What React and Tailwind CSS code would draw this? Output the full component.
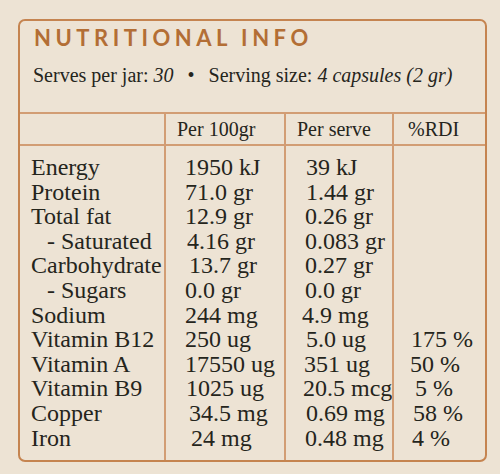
import React from "react";

const rows = [
  { l: "Energy", a: "1950 kJ", ap: "pl-[19px]", b: "39 kJ", bp: "pl-[20px]", c: "", cp: "" },
  { l: "Protein", a: "71.0 gr", ap: "pl-[19px]", b: "1.44 gr", bp: "pl-[20px]", c: "", cp: "" },
  { l: "Total fat", a: "12.9 gr", ap: "pl-[19px]", b: "0.26 gr", bp: "pl-[19px]", c: "", cp: "" },
  { l: "- Saturated", ind: true, a: "4.16 gr", ap: "pl-[21px]", b: "0.083 gr", bp: "pl-[19px]", c: "", cp: "" },
  { l: "Carbohydrate", a: "13.7 gr", ap: "pl-[23px]", b: "0.27 gr", bp: "pl-[19px]", c: "", cp: "" },
  { l: "- Sugars", ind: true, a: "0.0 gr", ap: "pl-[19px]", b: "0.0 gr", bp: "pl-[19px]", c: "", cp: "" },
  { l: "Sodium", a: "244 mg", ap: "pl-[19px]", b: "4.9 mg", bp: "pl-[16px]", c: "", cp: "" },
  { l: "Vitamin B12", a: "250 ug", ap: "pl-[19px]", b: "5.0 ug", bp: "pl-[20px]", c: "175 %", cp: "pl-[17px]" },
  { l: "Vitamin A", a: "17550 ug", ap: "pl-[19px]", b: "351 ug", bp: "pl-[18px]", c: "50 %", cp: "pl-[16px]" },
  { l: "Vitamin B9", a: "1025 ug", ap: "pl-[20px]", b: "20.5 mcg", bp: "pl-[17px]", c: "5 %", cp: "pl-[21px]" },
  { l: "Copper", a: "34.5 mg", ap: "pl-[23px]", b: "0.69 mg", bp: "pl-[20px]", c: "58 %", cp: "pl-[19px]" },
  { l: "Iron", a: "24 mg", ap: "pl-[25px]", b: "0.48 mg", bp: "pl-[19px]", c: "4 %", cp: "pl-[18px]" },
];

export default function App() {
  return (
    <div className="w-[500px] h-[474px] bg-[#ede3d4] pt-[19px] pl-[18px] font-['Liberation_Serif','DejaVu_Serif',serif]">
      <div className="w-[469px] h-[443px] border-2 border-[#c58450] rounded-[7px] flex flex-col text-[#25251c]">
        <div className="pl-[14px] pt-[6px] h-[91px]">
          <div className="text-[22px] leading-[22px] font-bold tracking-[0.205em] text-[#b36e35] font-['Lato','DejaVu_Sans',sans-serif]">
            NUTRITIONAL INFO
          </div>
          <div className="mt-[16px] -ml-[1px] text-[20px] leading-[20px] whitespace-pre">
            Serves per jar: <i>30</i>
            <span className="inline-block mx-[14px]">•</span>
            Serving size: <i>4 capsules (2 gr)</i>
          </div>
        </div>
        <div className="grid grid-cols-[144px_120px_108px_1fr] border-t-2 border-b-2 border-[#d29d74] h-[34px] text-[20px] leading-[28px]">
          <div className="pt-[1px]"></div>
          <div className="border-l-2 border-[#d29d74] pl-[11px] pt-[1px]">Per 100gr</div>
          <div className="border-l-2 border-[#d29d74] pl-[11px] pt-[1px]">Per serve</div>
          <div className="border-l-2 border-[#d29d74] pl-[14px] pt-[1px]">%RDI</div>
        </div>
        <div className="grid grid-cols-[144px_120px_108px_1fr] flex-1 text-[24px] leading-[24.6px]">
          <div className="pt-[9px]">
            {rows.map((r) => (
              <div key={r.l} className={`whitespace-nowrap ${r.ind ? "pl-[27px]" : "pl-[11px]"}`}>
                {r.l}
              </div>
            ))}
          </div>
          <div className="border-l-2 border-[#d29d74] pt-[9px]">
            {rows.map((r) => (
              <div key={r.l} className={`whitespace-nowrap ${r.ap}`}>
                {r.a}
              </div>
            ))}
          </div>
          <div className="border-l-2 border-[#d29d74] pt-[9px]">
            {rows.map((r) => (
              <div key={r.l} className={`whitespace-nowrap ${r.bp}`}>
                {r.b}
              </div>
            ))}
          </div>
          <div className="border-l-2 border-[#d29d74] pt-[9px]">
            {rows.map((r) => (
              <div key={r.l} className={`whitespace-nowrap h-[24.6px] ${r.cp}`}>
                {r.c}
              </div>
            ))}
          </div>
        </div>
      </div>
    </div>
  );
}
